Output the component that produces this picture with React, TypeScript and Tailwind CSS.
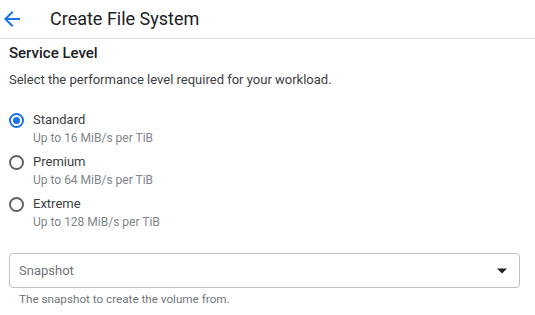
import React from "react";

function Radio({ checked }: { checked: boolean }) {
  return checked ? (
    <span className="flex h-[15px] w-[15px] items-center justify-center rounded-full border-2 border-[#1a73e8]">
      <span className="h-[7px] w-[7px] rounded-full bg-[#1a73e8]" />
    </span>
  ) : (
    <span className="h-[15px] w-[15px] rounded-full border-2 border-[#5f6368]" />
  );
}

const options = [
  { name: "Standard", sub: "Up to 16 MiB/s per TiB", checked: true },
  { name: "Premium", sub: "Up to 64 MiB/s per TiB", checked: false },
  { name: "Extreme", sub: "Up to 128 MiB/s per TiB", checked: false },
];

export default function App() {
  return (
    <div className="h-[315px] w-[535px] overflow-hidden bg-white font-['Roboto',sans-serif]">
      <div className="flex h-[39px] items-center border-b border-[#dadce0]">
        <svg className="h-[24px] w-[24px]" viewBox="0 0 24 24" fill="#1a73e8">
          <path d="M20 11H7.83l5.59-5.59L12 4l-8 8 8 8 1.41-1.41L7.83 13H20v-2z" />
        </svg>
        <span className="ml-[26px] text-[18px] leading-[24px] text-[#202124]">Create File System</span>
      </div>
      <div className="px-[9px]">
        <div className="mt-[4px] text-[15px] font-medium leading-[20px] text-[#202124]">Service Level</div>
        <div className="mt-[7px] text-[13px] leading-[20px] text-[#3c4043]">
          Select the performance level required for your workload.
        </div>
        <div className="mt-[20px] flex flex-col gap-[6px]">
          {options.map((o) => (
            <div key={o.name} className="flex">
              <div className="flex h-[20px] w-[24px] items-center">
                <Radio checked={o.checked} />
              </div>
              <div className="flex flex-col">
                <span className="text-[13px] leading-[20px] text-[#3c4043]">{o.name}</span>
                <span className="text-[12px] leading-[16px] text-[#80868b]">{o.sub}</span>
              </div>
            </div>
          ))}
        </div>
        <div className="mt-[23px] flex h-[35px] w-[511px] items-center justify-between rounded-[4px] border border-[#bdc1c6] pl-[9px] pr-[12px]">
          <span className="text-[13px] text-[#70757a]">Snapshot</span>
          <svg className="h-[6px] w-[10px]" viewBox="0 0 10 5" fill="#202124">
            <path d="M0 0h10L5 5z" />
          </svg>
        </div>
        <div className="mt-[3px] pl-[10px] text-[11.7px] leading-[16px] text-[#70757a]">
          The snapshot to create the volume from.
        </div>
      </div>
    </div>
  );
}
